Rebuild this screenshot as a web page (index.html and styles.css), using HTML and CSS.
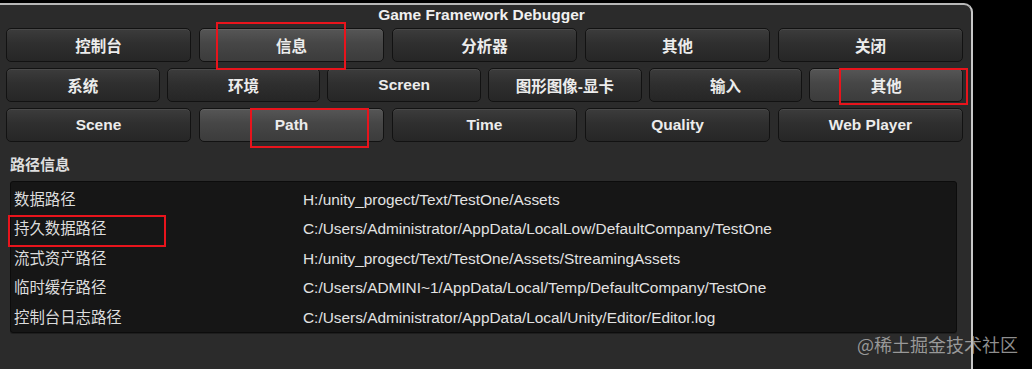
FILE: index.html
```html
<!DOCTYPE html>
<html>
<head>
<meta charset="utf-8">
<link rel="stylesheet" href="styles.css">
</head>
<body>
<div class="window">
  <div class="title">Game Framework Debugger</div>
  <div class="rows">
    <div class="row r5">
      <div class="btn">控制台</div>
      <div class="btn sel">信息</div>
      <div class="btn">分析器</div>
      <div class="btn">其他</div>
      <div class="btn">关闭</div>
    </div>
    <div class="row r6">
      <div class="btn">系统</div>
      <div class="btn">环境</div>
      <div class="btn">Screen</div>
      <div class="btn">图形图像-显卡</div>
      <div class="btn">输入</div>
      <div class="btn sel">其他</div>
    </div>
    <div class="row r5">
      <div class="btn">Scene</div>
      <div class="btn sel">Path</div>
      <div class="btn">Time</div>
      <div class="btn">Quality</div>
      <div class="btn">Web Player</div>
    </div>
  </div>
  <div class="section">路径信息</div>
  <div class="table">
    <div class="trow"><span class="k">数据路径</span><span class="v">H:/unity_progect/Text/TestOne/Assets</span></div>
    <div class="trow"><span class="k">持久数据路径</span><span class="v">C:/Users/Administrator/AppData/LocalLow/DefaultCompany/TestOne</span></div>
    <div class="trow"><span class="k">流式资产路径</span><span class="v">H:/unity_progect/Text/TestOne/Assets/StreamingAssets</span></div>
    <div class="trow"><span class="k">临时缓存路径</span><span class="v">C:/Users/ADMINI~1/AppData/Local/Temp/DefaultCompany/TestOne</span></div>
    <div class="trow"><span class="k">控制台日志路径</span><span class="v">C:/Users/Administrator/AppData/Local/Unity/Editor/Editor.log</span></div>
  </div>
</div>
<div class="mark m1"></div>
<div class="mark m2"></div>
<div class="mark m3"></div>
<div class="mark m4"></div>
<div class="watermark">@稀土掘金技术社区</div>
</body>
</html>
```
FILE: styles.css
```css
html, body {
  margin: 0;
  padding: 0;
  background: #000;
  width: 1032px;
  height: 369px;
  overflow: hidden;
  font-family: "Liberation Sans", "Noto Sans CJK SC", sans-serif;
}
body { position: relative; }
.window {
  margin-top: 3px;
  height: 366px;
  background: #2b2b2b;
  border-top: 2px solid #b8b8b8;
  border-right: 2px solid #c8c8c8;
  border-top-right-radius: 9px;
  box-sizing: border-box;
  width: 973px;
  display: flex;
  flex-direction: column;
}
.title {
  height: 21px;
  line-height: 20px;
  text-align: center;
  color: #f0f0f0;
  font-weight: bold;
  font-size: 15.5px;
  padding-right: 8px;
}
.rows {
  display: flex;
  flex-direction: column;
  gap: 6px;
  padding: 2px 8px 0 6px;
}
.row { display: flex; }
.r5 { gap: 8px; }
.r6 { gap: 7px; }
.btn {
  flex: 1 1 0;
  height: 34px;
  box-sizing: border-box;
  border: 1px solid #121212;
  border-radius: 5px;
  background: linear-gradient(#3c3c3c 0%, #2f2f2f 45%, #262626 100%);
  box-shadow: inset 0 1px 0 #4a4a4a;
  color: #ececec;
  font-weight: bold;
  font-size: 15.5px;
  display: flex;
  align-items: center;
  justify-content: center;
}
.btn.sel {
  background: linear-gradient(#565656 0%, #464646 45%, #3c3c3c 100%);
  box-shadow: inset 0 1px 0 #626262;
}
.section {
  margin: 13px 0 0 10px;
  height: 21px;
  line-height: 20px;
  color: #dedede;
  font-weight: bold;
  font-size: 15px;
}
.table {
  margin: 5px 0 0 10px;
  width: 947px;
  height: 152px;
  box-sizing: border-box;
  background: #161616;
  border: 1px solid #0c0c0c;
  border-radius: 3px;
  box-shadow: 0 1px 0 #1e1e1e;
  padding: 3px 0 0 3px;
  display: flex;
  flex-direction: column;
}
.trow {
  height: 29.7px;
  line-height: 29px;
  display: flex;
  font-size: 15.4px;
  color: #dcdcdc;
}
.k { width: 289px; flex: none; }
.v { color: #e2e2e2; }
.mark {
  position: absolute;
  border: 2px solid #e8141c;
  box-sizing: border-box;
}
.m1 { left: 216px; top: 22px; width: 130px; height: 48px; }
.m2 { left: 839px; top: 68px; width: 129px; height: 37px; }
.m3 { left: 250px; top: 108px; width: 119px; height: 40px; }
.m4 { left: 8px; top: 215px; width: 158px; height: 32px; }
.watermark {
  position: absolute;
  left: 857px;
  top: 331px;
  font-size: 18px;
  color: rgba(190, 190, 190, 0.75);
  font-family: "Noto Sans CJK SC", sans-serif;
  white-space: nowrap;
}
```
